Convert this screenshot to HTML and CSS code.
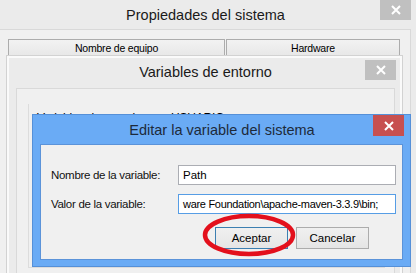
FILE: index.html
```html
<!DOCTYPE html>
<html lang="es">
<head>
<meta charset="utf-8">
<title>Editar la variable del sistema</title>
<link rel="stylesheet" href="styles.css">
</head>
<body>
<div class="desk">
  <section class="win win-main">
    <header class="titlebar main-title">
      <span></span>
      <h1 class="title">Propiedades del sistema</h1>
      <span class="close close-gray"><svg width="10" height="10" viewBox="0 0 10 10"><path d="M1 1L9 9M9 1L1 9" stroke="#fff" stroke-width="2"/></svg></span>
    </header>
    <div class="main-body">
      <div class="tabs">
        <div class="tab tab-a">Nombre de equipo</div>
        <div class="tab tab-b">Hardware</div>
      </div>
    </div>
  </section>

  <section class="win win-env">
    <header class="titlebar env-title">
      <span></span>
      <h2 class="title">Variables de entorno</h2>
      <span class="close close-gray close-env"><svg width="10" height="10" viewBox="0 0 10 10"><path d="M1 1L9 9M9 1L1 9" stroke="#fff" stroke-width="2"/></svg></span>
    </header>
    <div class="env-body">
      <div class="group">
        <p class="group-label">Variables de usuario para USUARIO</p>
      </div>
    </div>
  </section>

  <section class="win win-edit">
    <header class="titlebar edit-title">
      <span></span>
      <h3 class="title">Editar la variable del sistema</h3>
      <span class="close close-red"><svg width="10" height="10" viewBox="0 0 10 10"><path d="M1 1L9 9M9 1L1 9" stroke="#fff" stroke-width="2"/></svg></span>
    </header>
    <div class="edit-body">
      <div class="field">
        <label class="label">Nombre de la variable:</label>
        <div class="input">Path</div>
      </div>
      <div class="field">
        <label class="label">Valor de la variable:</label>
        <div class="input input-focus">ware Foundation\apache-maven-3.3.9\bin;</div>
      </div>
      <div class="buttons">
        <button class="btn btn-default">Aceptar</button>
        <button class="btn">Cancelar</button>
      </div>
    </div>
  </section>

  <svg class="mark" width="416" height="273" viewBox="0 0 416 273">
    <ellipse cx="249" cy="235" rx="44" ry="19" fill="none" stroke="#e3101c" stroke-width="4.5"/>
  </svg>
</div>
</body>
</html>
```

FILE: styles.css
```css
* { box-sizing: border-box; }
html, body { margin: 0; padding: 0; }
body {
  width: 416px;
  height: 273px;
  overflow: hidden;
  background: #ebebeb;
  font-family: "Liberation Sans", Arial, sans-serif;
  color: #000;
}
.desk {
  position: relative;
  width: 416px;
  height: 273px;
  overflow: hidden;
}
.title {
  margin: 0;
  font-weight: normal;
  white-space: nowrap;
}
.titlebar {
  display: grid;
  grid-template-columns: 1fr auto 1fr;
  align-items: start;
}
.close {
  justify-self: end;
  display: flex;
  align-items: center;
  justify-content: center;
  width: 31px;
  height: 20px;
}
.close-gray { background: #c0c0c0; }
.close-red { background: #c75050; height: 21px; }

/* main window */
.win-main {
  height: 273px;
  display: flex;
  flex-direction: column;
}
.main-title {
  height: 29px;
  padding-right: 5px;
}
.main-title .title {
  font-size: 14.5px;
  line-height: 29px;
  color: #1a1a1a;
  padding-top: 1px;
}
.main-body {
  flex: 1;
  margin-right: 5px;
  background: #f0f0f0;
  border-top: 1px solid #d9d9d9;
  border-right: 1px solid #d9d9d9;
  padding: 9px 0 0 8px;
}
.tabs {
  display: flex;
  gap: 1px;
}
.tab {
  height: 19px;
  border: 1px solid #acacac;
  border-bottom: none;
  background: linear-gradient(#f2f2f2, #e6e6e6);
  font-size: 10.5px;
  line-height: 17px;
  text-align: center;
  letter-spacing: -0.2px;
}
.tab-a { width: 217px; }
.tab-b { width: 174px; }

/* env window */
.win-env {
  position: absolute;
  left: 6px;
  top: 55px;
  width: 397px;
  height: 230px;
  background: #ebebeb;
  border: 1px solid #d2d2d2;
  box-shadow: inset 0 0 0 2px #fafafa;
  padding: 0 7px 0 9px;
  display: flex;
  flex-direction: column;
}
.env-title {
  height: 32px;
  padding-top: 4px;
}
.env-title .title {
  font-size: 14.5px;
  line-height: 24px;
  color: #1a1a1a;
}
.close-env { margin-right: -1px; }
.env-body {
  flex: 1;
  background: #f0f0f0;
  border: 1px solid #d9d9d9;
  padding: 15px 9px 0 11px;
}
.group {
  height: 164px;
  border-left: 1px solid #dcdcdc;
  border-bottom: 1px solid #dcdcdc;
  padding-left: 8px;
}
.group-label {
  margin: 0;
  font-size: 12px;
  line-height: 14px;
  color: #000;
  white-space: nowrap;
  letter-spacing: -0.2px;
  transform: translateY(7px);
}

/* edit window */
.win-edit {
  position: absolute;
  left: 32px;
  top: 114px;
  width: 379px;
  height: 153px;
  background: #6aabf5;
  border: 1px solid #5590d8;
  padding: 0 7px 6px 7px;
  display: flex;
  flex-direction: column;
}
.edit-title {
  height: 29px;
  margin-right: -1px;
}
.edit-title .title {
  font-size: 14.5px;
  line-height: 30px;
  color: #1d2a3a;
}
.edit-body {
  flex: 1;
  background: #f0f0f0;
  border: 1px solid #5b93d9;
  padding: 20px 6px 0 10px;
  display: flex;
  flex-direction: column;
  gap: 9px;
}
.field {
  display: flex;
  align-items: center;
}
.label {
  width: 127px;
  font-size: 11.5px;
  letter-spacing: -0.3px;
  color: #111;
  white-space: nowrap;
}
.input {
  flex: 1;
  height: 20px;
  border: 1px solid #abadb3;
  background: #fff;
  font-size: 11.5px;
  line-height: 18px;
  padding-left: 4px;
  white-space: nowrap;
  overflow: hidden;
}
.input-focus {
  border-color: #569de5;
  font-size: 11px;
  letter-spacing: -0.3px;
}
.buttons {
  display: flex;
  justify-content: flex-end;
  gap: 8px;
  padding-right: 27px;
  margin-top: 4px;
}
.btn {
  width: 73px;
  height: 22px;
  border: 1px solid #acacac;
  background: linear-gradient(#f0f0f0, #e5e5e5);
  font-family: "Liberation Sans", Arial, sans-serif;
  font-size: 11.5px;
  color: #000;
  padding: 0;
}
.btn-default { border-color: #3c7fb1; }

.mark {
  position: absolute;
  left: 0;
  top: 0;
  pointer-events: none;
}
```
